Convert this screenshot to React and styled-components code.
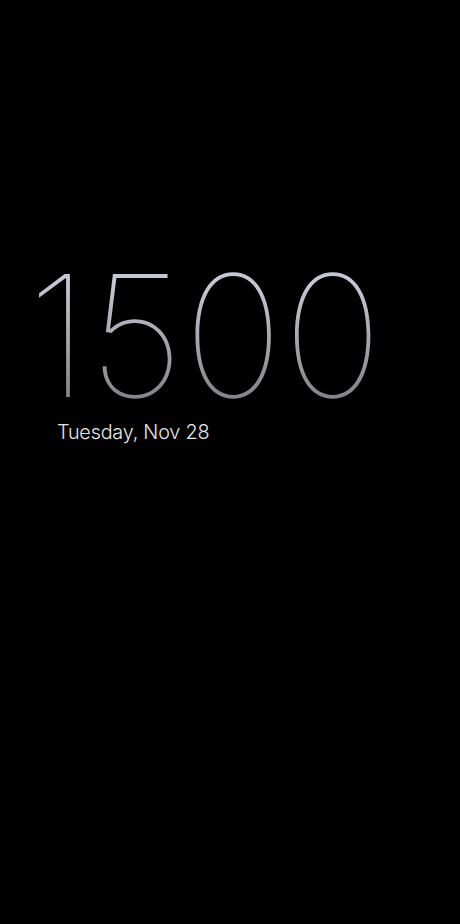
import React from 'react';
import styled, { createGlobalStyle } from 'styled-components';

const GlobalStyle = createGlobalStyle`
  html, body {
    margin: 0;
    padding: 0;
    background: #000;
  }
`;

const Screen = styled.div`
  width: 460px;
  height: 924px;
  background: #000;
  display: flex;
  flex-direction: column;
  padding: 251px 0 0 27px;
  box-sizing: border-box;
  font-family: Inter, "Liberation Sans", sans-serif;
`;

const Time = styled.div`
  font-size: 169px;
  font-weight: 100;
  line-height: 1;
  letter-spacing: -0.5px;
  background: linear-gradient(180deg, #c4c8d4 20%, #85868b 85%);
  -webkit-background-clip: text;
  background-clip: text;
  color: transparent;
  width: max-content;
`;

const DateLabel = styled.div`
  margin: 0 0 0 30px;
  font-size: 19.8px;
  font-weight: 300;
  color: #e6e6e6;
  letter-spacing: -0.2px;
`;

export default function App() {
  return (
    <Screen>
      <GlobalStyle />
      <Time>1500</Time>
      <DateLabel>Tuesday, Nov 28</DateLabel>
    </Screen>
  );
}
